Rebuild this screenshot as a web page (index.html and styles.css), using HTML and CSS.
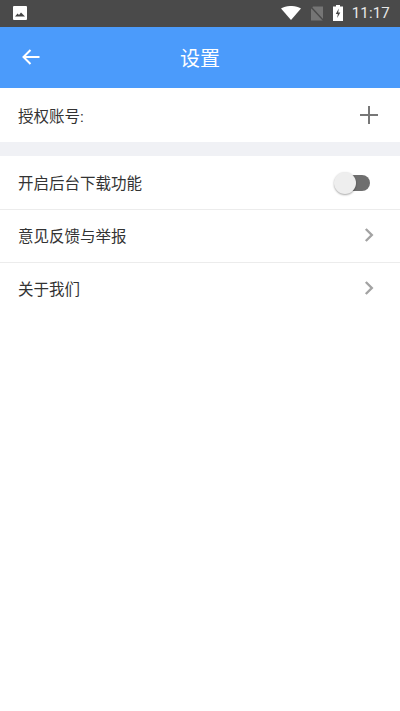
FILE: index.html
```html
<!DOCTYPE html>
<html lang="zh-CN">

<head>
    <meta charset="UTF-8">
    <meta name="viewport" content="width=device-width, initial-scale=1.0">
    <title>设置</title>
    <link rel="stylesheet" href="styles.css">
</head>

<body>
    <div class="container">
        <div class="status-bar">
            <svg class="status-photo" width="14" height="14" viewBox="0 0 14 14">
                <rect width="14" height="14" rx="1" fill="#fff" />
                <path d="M2 10.5 L4.6 7.5 L6 9 L8 6.5 L12 10.5 Z" fill="#444" />
            </svg>
            <div class="status-right">
                <svg width="20" height="14" viewBox="0 0 20 14">
                    <path d="M0 2.6 C5.5 -0.9 14.5 -0.9 20 2.6 L10 14 Z" fill="#fff" />
                </svg>
                <svg width="14" height="15" viewBox="0 0 14 15">
                    <path d="M3 0.5 H13 V14.5 H1 V3 Z" fill="#757575" />
                    <path d="M1 1 L13.5 14.5" stroke="#4a4a4a" stroke-width="1.4" />
                </svg>
                <svg width="10" height="16" viewBox="0 0 10 16">
                    <path d="M3 0 H7 V1.5 H10 V16 H0 V1.5 H3 Z" fill="#fff" />
                    <path d="M5.8 3.5 L2.8 9 H4.8 L4.2 13 L7.3 7.4 H5.2 Z" fill="#444" />
                </svg>
                <span class="status-time">11:17</span>
            </div>
        </div>

        <div class="header">
            <button class="back-button">
                <svg width="20" height="18" viewBox="0 0 20 18">
                    <path d="M18.5 9 H2.5 M9.5 2 L2.5 9 L9.5 16" fill="none" stroke="#fff" stroke-width="2" />
                </svg>
            </button>
            <div class="title">设置</div>
        </div>

        <div class="row account-row">
            <span>授权账号:</span>
            <svg width="20" height="20" viewBox="0 0 20 20">
                <path d="M10 1 V19 M1 10 H19" stroke="#777" stroke-width="2" />
            </svg>
        </div>

        <div class="group">
            <div class="row">
                <span>开启后台下载功能</span>
                <div class="switch">
                    <div class="switch-thumb"></div>
                </div>
            </div>
            <div class="row">
                <span>意见反馈与举报</span>
                <svg class="chevron" width="10" height="14" viewBox="0 0 10 14">
                    <path d="M1.8 1 L7.8 7 L1.8 13" fill="none" stroke="#a3a3a3" stroke-width="2.4" />
                </svg>
            </div>
            <div class="row">
                <span>关于我们</span>
                <svg class="chevron" width="10" height="14" viewBox="0 0 10 14">
                    <path d="M1.8 1 L7.8 7 L1.8 13" fill="none" stroke="#a3a3a3" stroke-width="2.4" />
                </svg>
            </div>
        </div>
    </div>
</body>

</html>
```

FILE: styles.css
```css
* {
    box-sizing: border-box;
    font-family: 'Roboto', 'Noto Sans CJK SC', sans-serif;
}

body {
    margin: 0;
    padding: 0;
    background-color: #fff;
}

.container {
    width: 400px;
    height: 711px;
    overflow: hidden;
}

.status-bar {
    height: 27px;
    background-color: #4a4a4a;
    display: flex;
    align-items: center;
    justify-content: space-between;
    padding: 0 10px 1px 13px;
}

.status-right {
    display: flex;
    align-items: center;
    gap: 9px;
}

.status-time {
    color: #e8e8e8;
    font-size: 15px;
    letter-spacing: 0.2px;
}

.header {
    height: 61px;
    background-color: #4b9bfb;
    display: flex;
    align-items: center;
    justify-content: center;
    position: relative;
}

.back-button {
    position: absolute;
    top: 21px;
    left: 21px;
    background: none;
    border: none;
    padding: 0;
    display: flex;
}

.title {
    color: #fff;
    font-size: 20px;
}

.row {
    height: 53px;
    display: flex;
    align-items: center;
    justify-content: space-between;
    padding: 0 21px 2px 18px;
    font-size: 15.5px;
    color: #333;
    border-bottom: 1px solid #ececec;
}

.row:first-child {
    height: 54px;
}

.row:last-child {
    border-bottom-color: transparent;
}

.account-row {
    height: 54px;
    padding-bottom: 0;
    border-bottom: none;
}

.group {
    border-top: 14px solid #f0f1f5;
}

.chevron {
    margin-right: 5px;
}

.switch {
    width: 30px;
    height: 16px;
    border-radius: 8px;
    background-color: #6f6f6f;
    position: relative;
    margin-top: 2px;
    margin-right: 9px;
}

.switch-thumb {
    position: absolute;
    top: -3px;
    left: -6px;
    width: 22px;
    height: 22px;
    border-radius: 50%;
    background-color: #eee;
    box-shadow: 0 1px 2px rgba(0, 0, 0, 0.35);
}
```
